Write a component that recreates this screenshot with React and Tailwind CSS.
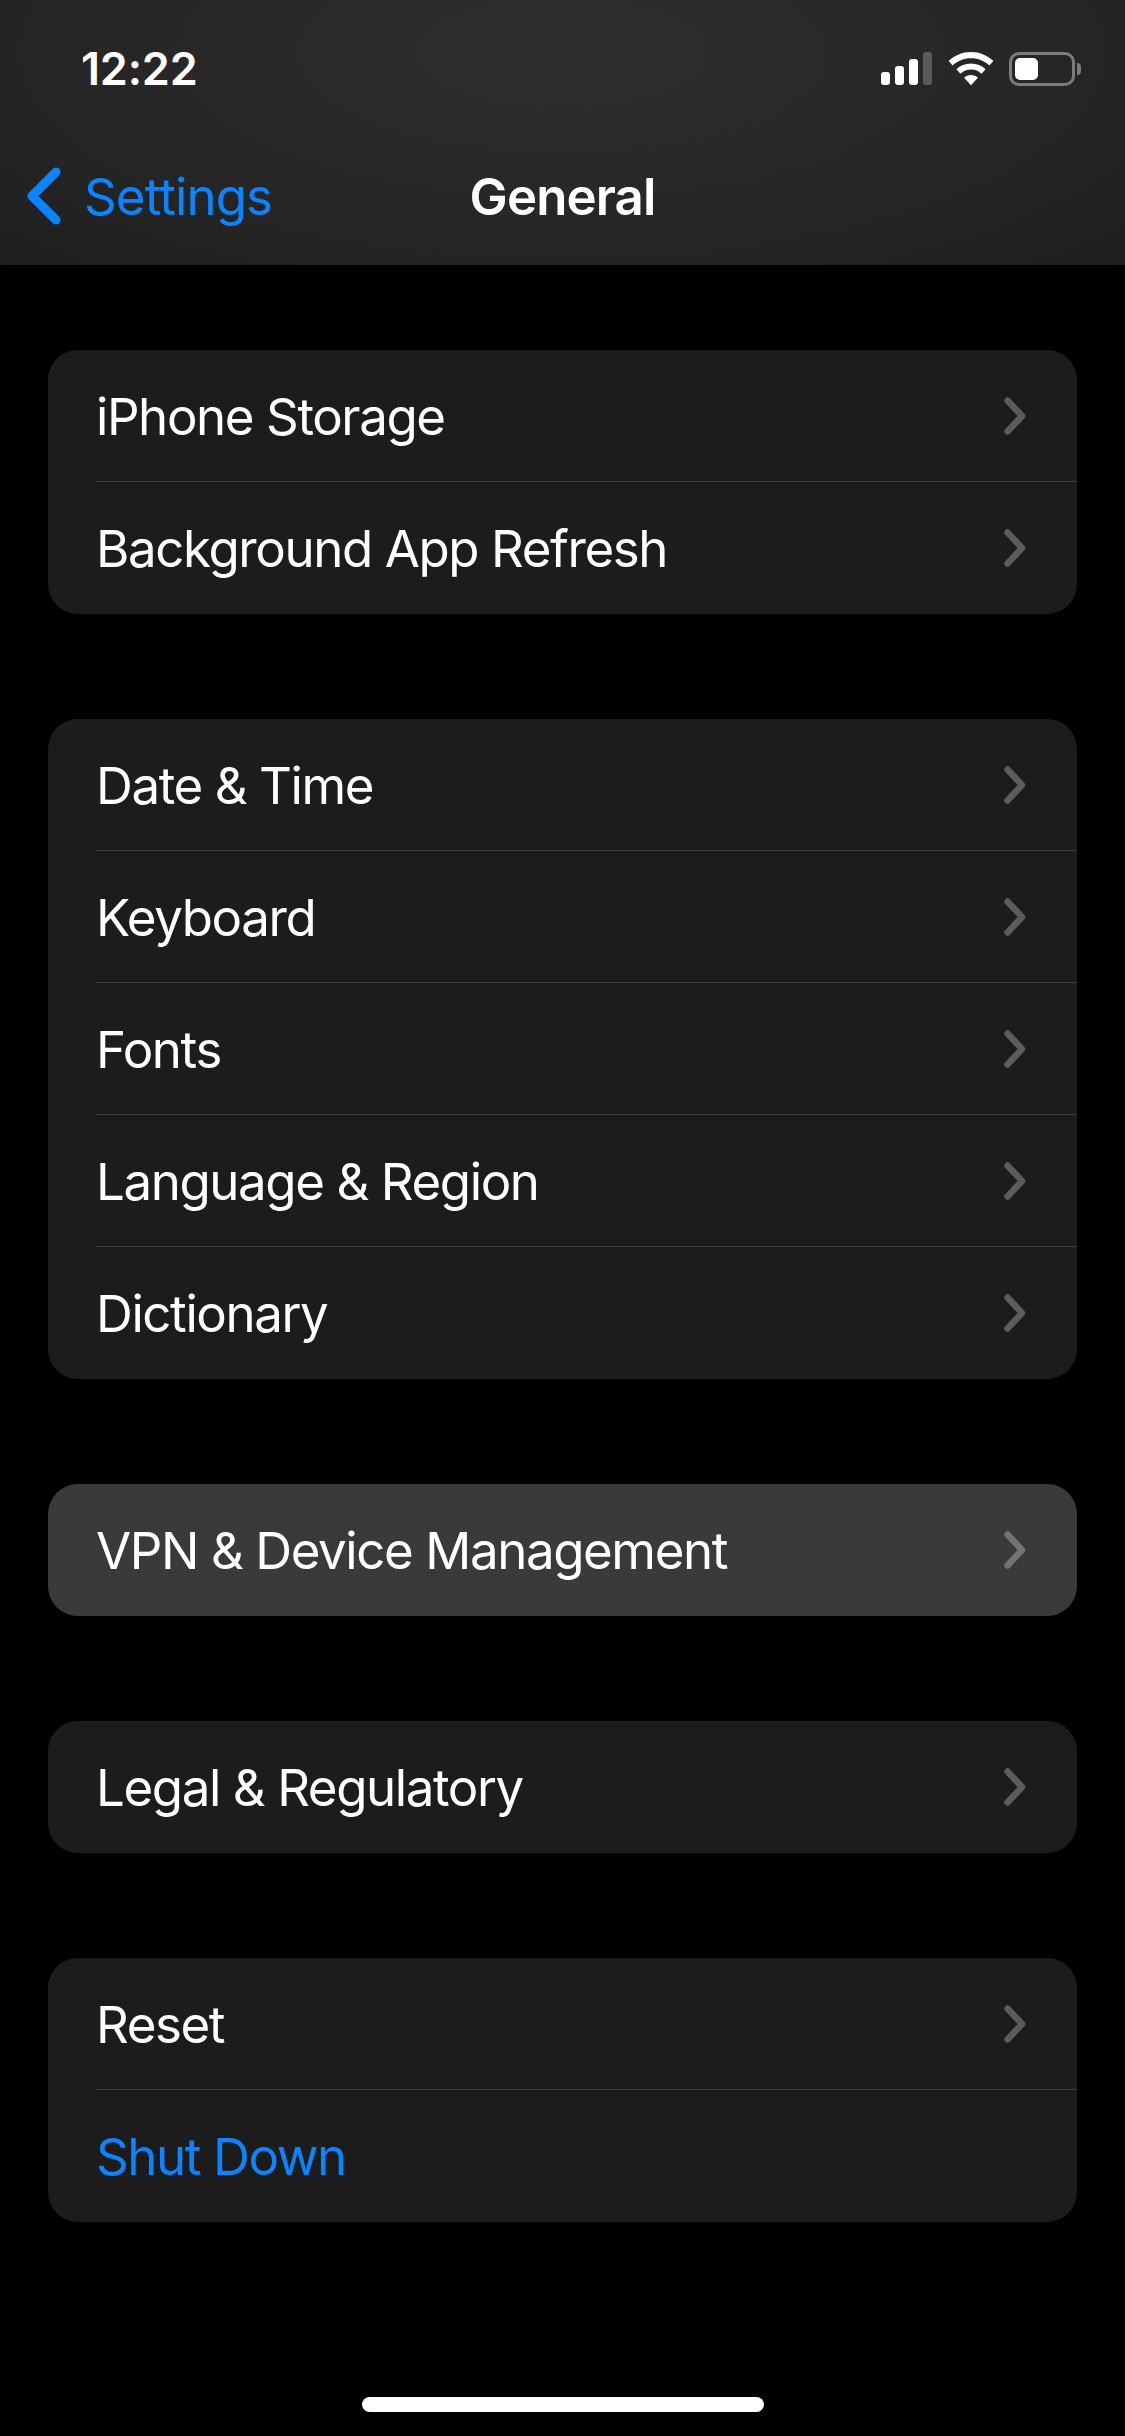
import React from 'react';

const groups = [
  [{ label: 'iPhone Storage' }, { label: 'Background App Refresh' }],
  [
    { label: 'Date & Time' },
    { label: 'Keyboard' },
    { label: 'Fonts' },
    { label: 'Language & Region' },
    { label: 'Dictionary' },
  ],
  [{ label: 'VPN & Device Management', pressed: true }],
  [{ label: 'Legal & Regulatory' }],
  [{ label: 'Reset' }, { label: 'Shut Down', action: true }],
];

const StatusIcons = () => (
  <div className="flex items-center">
    <svg width="52" height="34" viewBox="0 0 52 34" className="block">
      <rect x="0" y="20" width="9" height="13" rx="3" fill="#fff" />
      <rect x="14" y="14" width="9" height="19" rx="3" fill="#fff" />
      <rect x="28" y="7" width="9" height="26" rx="3" fill="#fff" />
      <rect x="42" y="0" width="9" height="33" rx="3" fill="#5a5a5a" />
    </svg>
    <svg width="46" height="34" viewBox="0 0 46 34" className="block ml-[15px]">
      <path d="M23 0C14.300 0 6.500 3.400 0.600 9L4.600 13.400C9.400 8.900 15.900 6.200 23 6.200C30.100 6.200 36.600 8.900 41.400 13.400L45.400 9C39.500 3.400 31.700 0 23 0Z" fill="#fff" />
      <path d="M23 11.500C17.300 11.500 12.200 13.700 8.400 17.300L12.500 21.700C15.200 19.200 18.900 17.600 23 17.600C27.100 17.600 30.800 19.200 33.500 21.700L37.600 17.300C33.800 13.700 28.700 11.500 23 11.500Z" fill="#fff" />
      <path d="M23 23C20.300 23 17.900 24 16.100 25.700L23 33.200L29.900 25.700C28.100 24 25.700 23 23 23Z" fill="#fff" />
    </svg>
    <div className="flex items-center ml-[15px]">
      <div className="w-[66px] h-[34px] rounded-[10px] border-[3px] border-[#7c7c7c] p-[3px] flex">
        <div className="w-[23px] h-full rounded-[5px] bg-white" />
      </div>
      <div className="w-[4px] h-[12px] ml-[2px] rounded-r-[4px] bg-[#7c7c7c]" />
    </div>
  </div>
);

const Chevron = ({ color }) => (
  <svg width="24" height="38" viewBox="0 0 24 38" fill="none" className="block shrink-0">
    <path d="M3.500 3.500L18 19L3.500 34.500" stroke={color} strokeWidth="6.500" strokeLinecap="round" strokeLinejoin="round" />
  </svg>
);

const Row = ({ item, last }) => (
  <div className={`h-[132px] flex items-center pl-[48px] ${item.pressed ? 'bg-[#3a3a3a]' : ''}`}>
    <div className={`flex-1 h-full flex items-center pr-[49px] ${last ? '' : 'border-b-[1px] border-[#3d3d3d]'}`}>
      <span className={`flex-1 pt-[3px] text-[51px] tracking-[-1.4px] ${item.action ? 'text-[#0a84ff]' : 'text-white'}`}>
        {item.label}
      </span>
      {!item.action && <Chevron color={item.pressed ? '#737377' : '#5c5c60'} />}
    </div>
  </div>
);

export default function App() {
  return (
    <div className="w-[1125px] h-[2436px] bg-black flex flex-col font-['Inter','Liberation_Sans',sans-serif] overflow-hidden">
      {/* Nav header */}
      <header className="h-[265px] shrink-0 bg-[radial-gradient(ellipse_at_50%_20%,#2e2e2e_0%,#262626_60%,#1f1f1f_100%)]">
        <div className="h-[132px] flex items-start justify-between pt-[47px] pl-[81px] pr-[44px]">
          <span className="text-[45px] leading-[44px] font-semibold text-white tracking-[-0.2px]">12:22</span>
          <div className="pt-[5px]">
            <StatusIcons />
          </div>
        </div>
        <div className="h-[133px] grid grid-cols-[1fr_auto_1fr] items-start">
          <div className="flex items-center h-[64px] pl-[23px] gap-[17px] mt-[32px]">
            <svg width="44" height="66" viewBox="0 0 44 66" fill="none" className="block shrink-0">
              <path d="M33 9L9 33L33 57" stroke="#0a84ff" strokeWidth="9" strokeLinecap="round" strokeLinejoin="round" />
            </svg>
            <span className="pt-[3px] text-[51px] text-[#0a84ff] tracking-[-0.9px]">Settings</span>
          </div>
          <span className="h-[64px] mt-[32px] pt-[3px] flex items-center text-[51px] font-semibold text-white tracking-[-0.9px]">General</span>
          <div />
        </div>
      </header>

      {/* Settings groups */}
      <main className="flex-1 flex flex-col gap-[105px] pt-[85px] px-[48px]">
        {groups.map((group, i) => (
          <section key={i} className="rounded-[30px] overflow-hidden bg-[#1c1c1c]">
            {group.map((item, j) => (
              <Row key={item.label} item={item} last={j === group.length - 1} />
            ))}
          </section>
        ))}
      </main>

      {/* Home indicator */}
      <div className="h-[39px] shrink-0 flex justify-center">
        <div className="w-[402px] h-[15px] rounded-full bg-white" />
      </div>
    </div>
  );
}
